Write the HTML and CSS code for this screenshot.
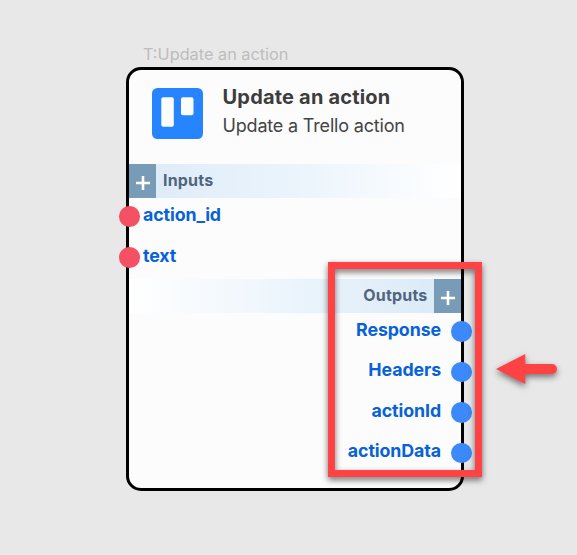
FILE: index.html
```html
<!DOCTYPE html>
<html lang="en">
<head>
<meta charset="utf-8">
<title>Update an action</title>
<link rel="stylesheet" href="styles.css">
</head>
<body>
<main class="canvas">
  <div class="node-label">T:Update an action</div>
  <section class="node">
    <header class="node-header">
      <svg class="logo" viewBox="0 0 51 51"><rect width="51" height="51" rx="5.5" fill="#2684ff"/><rect x="9.3" y="9.3" width="12.5" height="29.5" rx="2" fill="#fcfcfc"/><rect x="29" y="9.3" width="12.5" height="18" rx="2" fill="#fcfcfc"/></svg>
      <div class="heading">
        <h1 class="title">Update an action</h1>
        <p class="subtitle">Update a Trello action</p>
      </div>
    </header>
    <div class="band band-in">
      <span class="add"><svg viewBox="0 0 14 14"><path d="M7 0v14M0 7h14"/></svg></span>
      <span class="band-text">Inputs</span>
    </div>
    <div class="ports ports-in">
      <div class="port"><i class="dot"></i><span>action_id</span></div>
      <div class="port"><i class="dot"></i><span>text</span></div>
    </div>
    <div class="band band-out">
      <span class="band-text">Outputs</span>
      <span class="add"><svg viewBox="0 0 14 14"><path d="M7 0v14M0 7h14"/></svg></span>
    </div>
    <div class="ports ports-out">
      <div class="port"><span>Response</span><i class="dot"></i></div>
      <div class="port"><span>Headers</span><i class="dot"></i></div>
      <div class="port"><span>actionId</span><i class="dot"></i></div>
      <div class="port"><span>actionData</span><i class="dot"></i></div>
    </div>
  </section>
  <div class="callout"></div>
  <svg class="arrow" viewBox="0 0 60 30"><path d="M0 15 29.3 0v10H56a5 5 0 0 1 0 10H29.3v10z" fill="#ff4344"/></svg>
</main>
</body>
</html>
```

FILE: styles.css
```css
* { box-sizing: border-box; }
body { margin: 0; background: #e8e8e8; font-family: Inter, "Liberation Sans", sans-serif; }
.canvas { position: relative; width: 577px; height: 555px; padding: 44px 0 0 126px; overflow: hidden; }
.node-label { height: 23px; padding-left: 17px; font-size: 16.3px; line-height: 21px; color: #bdbdbd; white-space: nowrap; }
.node { width: 338px; height: 424px; border: 3px solid #000; border-radius: 15px; background: #fcfcfc; }
.node-header { display: flex; gap: 19.5px; height: 94px; padding: 18px 0 0 23px; }
.logo { width: 51px; height: 51px; flex: none; }
.title, .subtitle { margin: 0; white-space: nowrap; }
.title { margin-top: -3px; font-size: 20px; line-height: 24px; font-weight: 700; letter-spacing: .19px; color: #3d3d3d; }
.subtitle { margin-top: 5px; font-size: 18px; line-height: 24px; font-weight: 400; letter-spacing: -.18px; color: #444; }
.band { display: flex; height: 34px; }
.band-in { background: linear-gradient(90deg, #dcebf7, #ebf4fc 50%, #fff); }
.band-out { justify-content: flex-end; background: linear-gradient(270deg, #d8e9f6, #ebf4fc 50%, #fff); }
.band-text { padding: 0 6.5px 0 7px; font-size: 16px; line-height: 33px; font-weight: 700; letter-spacing: .18px; color: #50657f; }
.add { display: flex; align-items: center; justify-content: center; width: 27px; padding-top: 3px; background: #789cb8; }
.add svg { width: 14px; height: 14px; fill: none; stroke: #fff; stroke-width: 2.6; }
.ports { display: flow-root; font-size: 17.8px; font-weight: 700; letter-spacing: -.1px; color: #0762d8; }
.ports-in { height: 81px; }
.port { display: flex; align-items: center; height: 40.5px; line-height: 24px; }
.port span { margin-top: -3px; }
.ports-in .port { gap: 3.5px; height: 41px; margin: -2px 0 2px -10px; }
.ports-out .port { justify-content: flex-end; gap: 10px; margin: -2px -10.5px 2px 0; }
.dot { width: 20.5px; height: 20.5px; border-radius: 50%; background: #f55165; }
.ports-out .dot { background: #3c89fb; }
.callout { position: absolute; left: 328px; top: 262px; width: 154px; height: 215px; border: 7px solid #ff4344; filter: drop-shadow(0 3px 3px rgba(0,0,0,.55)); }
.arrow { position: absolute; left: 496px; top: 354px; width: 60px; height: 30px; overflow: visible; filter: drop-shadow(0 3px 3px rgba(0,0,0,.5)); }
```
